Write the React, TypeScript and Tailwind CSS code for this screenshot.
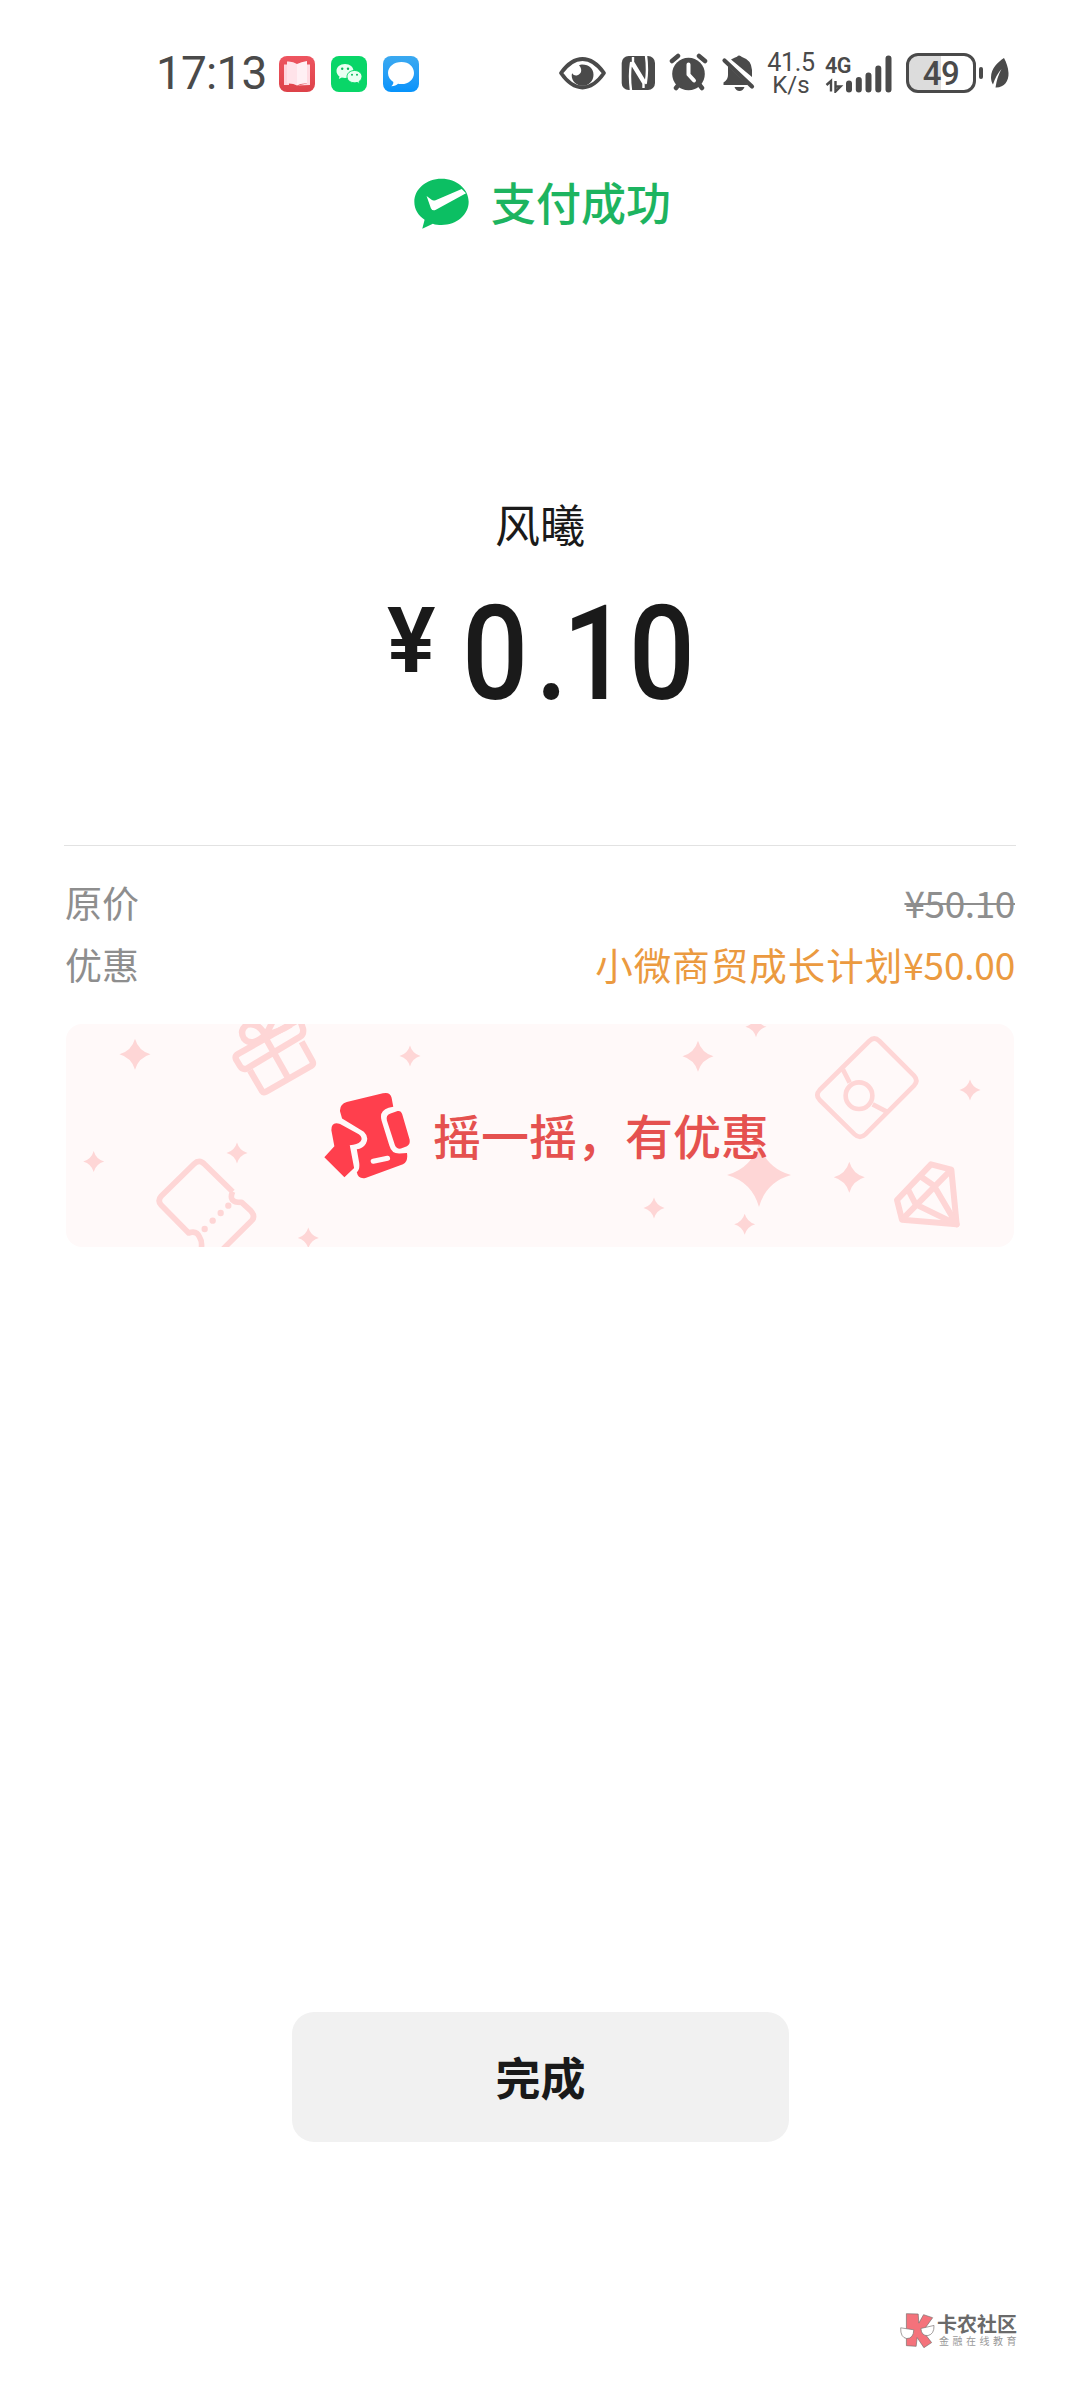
import type { ReactNode } from 'react';

const INK = '#4a4a4a';
const PINK = '#fed6d6';

// 四角星：中心點與半徑
const stars = [
  { x: 135, y: 1054.3, r: 15.5 },
  { x: 93.7, y: 1161.5, r: 10.5 },
  { x: 237, y: 1153, r: 10.5 },
  { x: 308.3, y: 1238, r: 10.5 },
  { x: 410, y: 1056, r: 10.5 },
  { x: 698, y: 1056.3, r: 15.5 },
  { x: 756, y: 1026.7, r: 10.5 },
  { x: 970, y: 1090, r: 10.5 },
  { x: 759, y: 1175, r: 32 },
  { x: 849.3, y: 1177.3, r: 15.5 },
  { x: 654, y: 1208, r: 10.5 },
  { x: 744.7, y: 1224.3, r: 10.5 },
];

const starPath = (x: number, y: number, r: number) => {
  const k = r * 0.22;
  return `M${x} ${y - r}Q${x + k} ${y - k} ${x + r} ${y}Q${x + k} ${y + k} ${x} ${y + r}Q${x - k} ${y + k} ${x - r} ${y}Q${x - k} ${y - k} ${x} ${y - r}Z`;
};

function AppIcon({ className, children }: { className: string; children: ReactNode }) {
  return (
    <div className={`size-9 overflow-hidden rounded-[8px] ${className}`}>
      <svg viewBox="0 0 36 36" className="size-9">{children}</svg>
    </div>
  );
}

function StatusBar() {
  return (
    <div className="flex h-[146px] items-start pl-[156px] pt-[53px] font-['Roboto','Liberation_Sans',sans-serif] text-[#4a4a4a]">
      <div className="flex h-10 items-center">
        <div className="w-[123px] whitespace-nowrap text-[46px] leading-10 tracking-[-0.8px]">17:13</div>
        <div className="flex gap-4 pt-0.5">
          <AppIcon className="bg-gradient-to-b from-[#ee5560] to-[#dd4249]">
            <path d="M5 8.500H10V29H5z" fill="#ffd5dd" />
            <path d="M8 5.500Q14 5 18 8v21.500Q14 27 8 27.500z" fill="#ffe3e9" />
            <path d="M18 8Q22 6 28 5v22.500Q22 27 18 29.500z" fill="#fff0f4" />
            <path d="M28 8.500H31V29L18 29.500 28 27.500z" fill="#ffdbe2" />
          </AppIcon>
          <AppIcon className="bg-[#09d668]">
            <path d="M14 8C9 8 5.500 11.200 5.500 15c0 2.300 1.200 4.200 3 5.500L7.800 23l3-1.400c1 .3 2 .4 3.200.4 5 0 8.500-3 8.500-7S19 8 14 8z" fill="#eafff2" />
            <path d="M23.500 14.500c-4.300 0-7.500 2.700-7.500 6.200s3.200 6.100 7.500 6.100c.9 0 1.800-.1 2.600-.4l2.600 1.300-.6-2.200c1.700-1.200 2.900-2.900 2.900-4.800 0-3.500-3.200-6.200-7.500-6.200z" fill="#eafff2" stroke="#09d668" strokeWidth="1" />
            <g fill="#09b95a">
              <circle cx="11.200" cy="12.800" r="1.200" />
              <circle cx="17" cy="12.800" r="1.200" />
              <circle cx="21" cy="18.800" r="1" />
              <circle cx="26" cy="18.800" r="1" />
            </g>
          </AppIcon>
          <AppIcon className="bg-gradient-to-b from-[#3aa9f0] to-[#0593fb]">
            <path d="M18.500 6C10.800 6 5 10.800 5 17c0 3.800 2.200 7 5.300 8.900.2 1.700-.6 3-2 4.400 3.200 0 5.200-1 6.700-2.500 1.100.2 2.300.3 3.500.3C26 28.100 31 23.200 31 17S26 6 18.500 6z" fill="#fff" />
          </AppIcon>
        </div>
      </div>

      <div className="ml-[139px] flex h-10 items-center">
        <svg viewBox="558 53 198 40" className="h-10 w-[198px]" fill={INK}>
          {/* 眼睛 */}
          <path d="M561 73Q571 59 582.500 59T604 73Q594 87.500 582.500 87.500T561 73z" fill="none" stroke={INK} strokeWidth="3.800" strokeLinejoin="round" />
          <path d="M582 64.500c7.500 0 11.500 4.500 11.500 10.200 0 6.300-4.800 11-10.800 11-6.200 0-11-4.500-11-10.200 0-1 .2-1.700.5-2.300 1.300 2 3.200 2.600 5.200 2 3.400-1.100 4.500-4.200 3.400-7-.4-1.300-1.100-2-1.800-2.600.9-.7 1.800-1.100 3-1.100z" />
          {/* NFC */}
          <rect x="621.700" y="56" width="33.300" height="34" rx="7" />
          <path d="M631 90.500Q629 76 631 63L643.500 83.500V88M646 55.500Q648 70 645.800 83L633 62V57" fill="none" stroke="#fff" strokeWidth="2.400" strokeLinejoin="round" />
          {/* 鬧鐘 */}
          <circle cx="688.500" cy="74" r="16.300" />
          <path d="M672 61l6-5M705 61l-6-5M676 88l4-5M702 88l-4-5" stroke={INK} strokeWidth="4.500" strokeLinecap="round" />
          <path d="M688.500 64.500v10l5.500 6" fill="none" stroke="#fff" strokeWidth="4" strokeLinecap="round" strokeLinejoin="round" />
          {/* 靜音 */}
          <path d="M731 59.500Q735 57.300 737 56.800 739 54 742 57q9.500 3 10 13V77z" />
          <path d="M728 66L748 85H723.500V82.500Q728 80 728 75z" />
          <path d="M724.500 60.500L752 86.500" stroke={INK} strokeWidth="4.200" strokeLinecap="round" />
          <path d="M734.500 87h10q-1.500 4-5 4t-5-4z" />
        </svg>
        <div className="ml-[12px] flex w-[46px] flex-col items-center pt-[2px] text-[25px] leading-[22px]">
          <span className="tracking-[-0.3px]">41.5</span>
          <span className="text-[24px]">K/s</span>
        </div>
        <div className="ml-[11px] flex w-[68px] flex-col">
          <span className="h-[21px] origin-left scale-x-[0.98] text-[22px] leading-[23px] font-semibold tracking-[-0.5px]">4G</span>
          <div className="-mt-[20px] h-[38px]">
            <svg viewBox="825 54 68 38" className="h-[38px] w-[68px]" stroke={INK} fill="none" strokeLinecap="round">
              <path d="M849 82.500v6M858.800 79v9.500M868.500 74.500v14M878.300 67.500v21M888.500 57.500v31" strokeWidth="6" />
              <path d="M826.500 84l4.500-4v10.500M835.500 80v10.500l5-5h-4" strokeWidth="2.400" strokeLinecap="butt" />
            </svg>
          </div>
        </div>
        <div className="ml-[13px] flex h-10 w-[70px] items-center justify-center rounded-[12px] border-[3px] border-[#4a4a4a] bg-linear-to-r from-[#dcdcdc] from-50% to-white to-50% text-[33px] leading-none font-medium tracking-[-0.5px]">
          49
        </div>
        <div className="ml-[3px] h-[12px] w-[4px] rounded-full bg-[#4a4a4a]" />
        <svg viewBox="0 0 20 32" className="ml-[7px] h-8 w-5" fill={INK}>
          <path d="M14 1C8 5 1 11 1 20.500c0 2.500.7 5 2 7Q6 18 11.500 12 7 20 5.500 30.500C14 31 19 24 18.500 16 18.200 10 16.500 6 14 1z" />
        </svg>
      </div>
    </div>
  );
}

function PayLogo() {
  return (
    <svg viewBox="103 52 166 152" className="h-[51px] w-[55px]">
      <path d="M186 53c-46 0-82 31-82 70 0 23 12 42 31 54l-7 27 32-15c8 3 17 4 26 4 46 0 82-31 82-70s-36-70-82-70z" fill="#0cbf63" />
      <path d="M141 105L156 117Q161 121 168 118L247 84 260 97 169 147Q159 152 154 142z" fill="#fff" />
    </svg>
  );
}

function ShakeIcon() {
  return (
    <svg viewBox="42 93 260 260" className="h-[87px] w-[87px]" fill="#ff3f4d">
      <path d="M90 151Q88 130 110 123L218 97Q240 92 244 110L249 137 235 140Q206 149 214 178L237 252Q244 278 268 277L290 275Q294 302 278 309L166 350Q144 354 140 333 150 325 147 304L140 264Q158 263 167 248 178 228 161 212L96 172z" />
      <path d="M64 207Q64 180 90 189L146 219Q160 230 151 241 142 251 119 252L132 320 103 348 43 288 73 255z" />
      <path d="M241 157L262 150Q272 148 276 160L298 236Q300 250 290 255L272 262Q259 264 254 252L230 178Q226 162 241 157z" />
      <path d="M189 300L232 291" stroke="#fff7f8" strokeWidth="15" strokeLinecap="round" />
    </svg>
  );
}

function BannerDecor() {
  return (
    <svg viewBox="66 1024 948 223" className="absolute inset-0 h-full w-full" fill="none" stroke={PINK} strokeLinejoin="round">
      {stars.map((s) => (
        <path key={`${s.x}-${s.y}`} d={starPath(s.x, s.y, s.r)} fill={PINK} stroke="none" />
      ))}
      <g transform="translate(50 1010) scale(.33333)" strokeWidth="19">
        {/* 禮物盒 */}
        <path d="M600 181L636 243Q640 249 648 245L783 168Q792 162 787 153L755 95" />
        <path d="M564 132L739 33Q747 30 753 38L759 56Q762 73 750 80L590 176Q577 180 570 168L558 148Q554 138 564 132zM640 72L712 200" />
        <path d="M645 75Q605 112 582 86 566 60 592 44 625 36 645 75zM648 74L673 25M648 74Q690 65 722 44" />
        {/* 票券 */}
        <path d="M548 545L463 462Q448 446 432 462L334 558Q321 572 334 586L416 669Q440 660 449 682 457 694 454 716M548 545Q533 578 575 577L602 602Q618 620 604 633L520 716" strokeWidth="17" />
        <g fill={PINK} stroke="none">
          <circle cx="464" cy="657" r="9.500" />
          <circle cx="488" cy="632" r="9.500" />
          <circle cx="512" cy="609" r="9.500" />
          <circle cx="535" cy="587" r="9.500" />
        </g>
      </g>
      <g transform="translate(630 1010) scale(.33333)" strokeWidth="14">
        {/* 紅包 */}
        <path d="M748 93L852 197Q866 212 852 227L706 373Q690 388 674 373L569 270Q555 255 569 240L718 93Q733 78 748 93z" />
        <circle cx="687" cy="257" r="40" />
        <path d="M639 179L659 218M728 283L770 305" />
        {/* 鑽石 */}
        <path d="M903 463L964 479 980 643 816 629 801 570z" strokeWidth="18" />
        <path d="M816 629L964 479M835 540L857 583 980 643 912 527 870 498" strokeWidth="18" />
      </g>
    </svg>
  );
}

export default function App() {
  return (
    <div className="flex h-[2400px] w-[1080px] flex-col overflow-hidden bg-white font-['Noto_Sans_CJK_SC',sans-serif] text-[#1a1a1a]">
      <StatusBar />

      {/* 標題 */}
      <div className="flex h-[114px] items-center justify-center pl-[5px]">
        <PayLogo />
        <h1 className="ml-[22px] pb-[2px] text-[45px] leading-[60px] font-medium text-[#1db460]">支付成功</h1>
      </div>

      {/* 收款方與金額 */}
      <div className="mt-[234px] text-center text-[45px] leading-[60px]">风曦</div>
      <div className="flex h-[154px] items-start pt-[29px] pl-[387px] font-['Roboto',sans-serif]">
        <span className="w-[75px] pt-[13px] text-[91px] leading-[90px] font-semibold">¥</span>
        <span className="origin-left scale-x-[0.89] pt-[2px] text-[131px] leading-[138px] font-medium">
          <span className="tracking-[8px]">0</span>
          <span className="tracking-[-6px]">.</span>10
        </span>
      </div>

      {/* 明細 */}
      <div className="mx-16 mt-[137px] border-t border-[#e2e2e2] pt-[25px] text-[37px] leading-[62px] text-[#8e8e8e]">
        <div className="flex justify-between pl-[1px] pr-[1px]">
          <span>原价</span>
          <span className="tracking-[-0.400px] line-through decoration-[2px]">¥50.10</span>
        </div>
        <div className="flex justify-between pl-[1px] pr-[1px]">
          <span>优惠</span>
          <span className="text-[#eb9a40]">
            <span className="tracking-[1px] text-[37.500px]">小微商贸成长计划</span>
            <span className="tracking-[-0.200px]">¥50.00</span>
          </span>
        </div>
      </div>

      {/* 優惠橫幅 */}
      <div className="relative mt-[29px] ml-[66px] flex h-[223px] w-[948px] items-center overflow-hidden rounded-[16px] bg-[#fff9f9] pl-[258px]">
        <BannerDecor />
        <div className="relative flex items-center">
          <ShakeIcon />
          <span className="ml-[22px] pb-[4px] text-[48px] leading-[60px] font-medium text-[#e5514f]">摇一摇，有优惠</span>
        </div>
      </div>

      <button className="mt-[765px] ml-[292px] h-[130px] w-[497px] shrink-0 rounded-[22px] bg-[#f1f1f1] text-[45px] font-bold">完成</button>

      {/* 浮水印 */}
      <div className="mt-[171px] ml-[900px] flex items-start">
        <svg viewBox="30 38 104 104" className="h-[35px] w-[35px]" stroke="#77706f" strokeWidth="2">
          <path d="M49 40L84 41 86 68 100 43 127 52 98 92 124 126 101 141 81 111 78 137 49 135z" fill="#f4727b" />
          <path d="M32 82L71 88Q70 114 50 114 31 111 32 82zM92 84L131 75Q132 101 113 105 94 107 92 84z" fill="#fff" />
        </svg>
        <div className="ml-[2px] flex flex-col whitespace-nowrap">
          <span className="text-[20px] leading-[22px] font-bold text-[#6a6a6a]">卡农社区</span>
          <span className="pl-[2px] text-[10px] leading-[12px] tracking-[3.500px] text-[#999]">金融在线教育</span>
        </div>
      </div>
    </div>
  );
}
